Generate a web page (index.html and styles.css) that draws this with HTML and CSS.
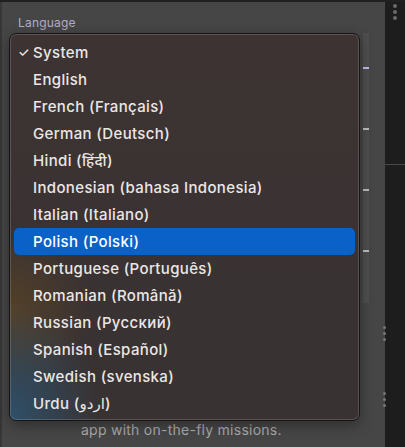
FILE: index.html
```html
<!DOCTYPE html>
<html lang="en">
<head>
<meta charset="utf-8">
<title>Language</title>
<link rel="stylesheet" href="styles.css">
</head>
<body>
<div class="app">
  <section class="panel">
    <div class="label">Language</div>
    <div class="content">
      <div class="track">
        <span class="tick tick-active"></span>
        <span class="tick"></span>
        <span class="tick"></span>
        <span class="tick"></span>
      </div>
    </div>
    <p class="desc">app with on-the-fly missions.</p>

    <ul class="menu" role="listbox">
      <li class="item checked"><span class="check">✓</span>System</li>
      <li class="item">English</li>
      <li class="item">French (Français)</li>
      <li class="item">German (Deutsch)</li>
      <li class="item">Hindi (हिंदी)</li>
      <li class="item">Indonesian (bahasa Indonesia)</li>
      <li class="item">Italian (Italiano)</li>
      <li class="item selected">Polish (Polski)</li>
      <li class="item">Portuguese (Português)</li>
      <li class="item">Romanian (Română)</li>
      <li class="item">Russian (Русский)</li>
      <li class="item">Spanish (Español)</li>
      <li class="item">Swedish (svenska)</li>
      <li class="item">Urdu (<span dir="rtl">اردو</span>)</li>
    </ul>
  </section>
  <aside class="side">
    <div class="more"><span></span><span></span><span></span></div>
    <div class="divider"></div>
    <div class="handle h1"><span></span><span></span><span></span></div>
    <div class="handle h2"><span></span><span></span><span></span></div>
  </aside>
</div>
</body>
</html>
```
FILE: styles.css
```css
* { box-sizing: border-box; }
html, body { margin: 0; padding: 0; }
body {
  width: 405px;
  height: 447px;
  overflow: hidden;
  background: #1b1b1b;
  font-family: Inter, "Noto Sans", "Noto Sans Devanagari", "DejaVu Sans", sans-serif;
}
.app {
  display: flex;
  height: 447px;
  border-top: 2px solid #202020;
}
.panel {
  position: relative;
  width: 385px;
  flex: none;
  background: #464646;
  border-left: 2px solid #373737;
  display: flex;
  flex-direction: column;
}
.label {
  padding: 14px 0 0 16px;
  font-size: 12px;
  letter-spacing: 0.2px;
  color: #b5adc6;
  line-height: 14px;
}
.content {
  flex: 1;
  display: flex;
  justify-content: flex-end;
  padding: 3px 16px 0 0;
}
.track {
  width: 6px;
  height: 270px;
  background: #4e4e4e;
  display: flex;
  flex-direction: column;
  padding-top: 34px;
  gap: 59px;
}
.tick {
  display: block;
  height: 2px;
  background: #bdbdbd;
}
.tick-active { background: #c6b8e6; }
.desc {
  margin: 0 0 9px;
  padding-left: 79px;
  font-size: 14px;
  letter-spacing: 0.25px;
  line-height: 16px;
  color: #a9a9a9;
}
.menu {
  position: absolute;
  left: 7px;
  top: 31px;
  width: 351px;
  height: 388px;
  margin: 0;
  padding: 5px 4px 0;
  list-style: none;
  border-radius: 7px;
  border: 1px solid #161414;
  box-shadow: inset 0 0 0 1px rgba(255,255,255,0.16), 0 4px 14px rgba(0,0,0,0.35);
  background:
    radial-gradient(ellipse 90px 120px at 0% 100%, rgba(45,85,115,0.85), rgba(45,85,115,0) 100%),
    radial-gradient(ellipse 80px 80px at 0% 72%, rgba(95,70,35,0.7), rgba(95,70,35,0) 100%),
    linear-gradient(180deg, #3d3333 0%, #383232 100%);
}
.item {
  position: relative;
  height: 27px;
  line-height: 27px;
  padding-left: 19px;
  font-size: 15px;
  font-weight: 500;
  letter-spacing: 0.35px;
  color: #ebe7e5;
  border-radius: 5px;
  white-space: nowrap;
}
.item.selected {
  background: #0a62c8;
  color: #ffffff;
}
.check {
  position: absolute;
  left: 4px;
  top: 0;
  font-size: 13px;
}
.side {
  position: relative;
  flex: 1;
  background: #1d1d1d;
}
.more {
  display: flex;
  flex-direction: column;
  align-items: center;
  gap: 2px;
  padding-top: 2px;
}
.more span, .handle span {
  width: 4px;
  height: 4px;
  border-radius: 50%;
  background: #6a6a6a;
}
.divider {
  margin-top: 144px;
  height: 1px;
  background: #4a4a4a;
}
.handle {
  position: absolute;
  left: -2px;
  display: flex;
  flex-direction: column;
  gap: 3px;
}
.handle span { width: 3px; height: 3px; background: #777; }
.h1 { top: 324px; }
.h2 { top: 390px; }
```
